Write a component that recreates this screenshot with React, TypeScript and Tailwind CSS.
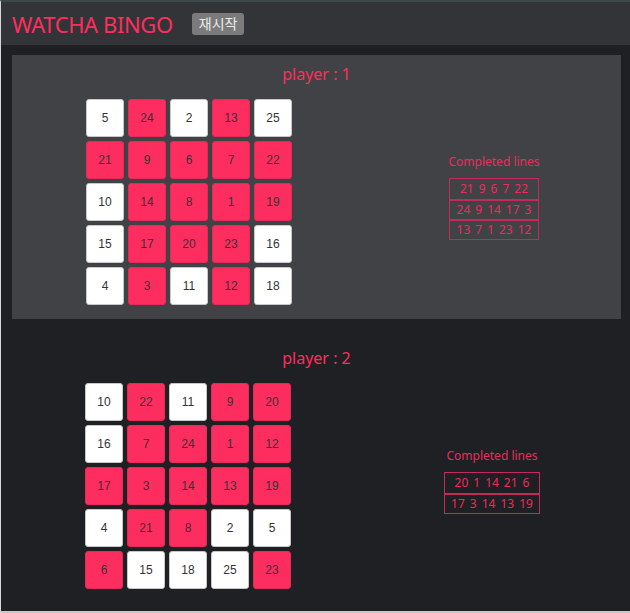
import React from 'react';

type Player = {
    id: number;
    board: number[][];
    marked: number[];
    lines: number[][];
};

const players: Player[] = [
    {
        id: 1,
        board: [
            [5, 24, 2, 13, 25],
            [21, 9, 6, 7, 22],
            [10, 14, 8, 1, 19],
            [15, 17, 20, 23, 16],
            [4, 3, 11, 12, 18],
        ],
        marked: [24, 13, 21, 9, 6, 7, 22, 14, 8, 1, 19, 17, 20, 23, 3, 12],
        lines: [
            [21, 9, 6, 7, 22],
            [24, 9, 14, 17, 3],
            [13, 7, 1, 23, 12],
        ],
    },
    {
        id: 2,
        board: [
            [10, 22, 11, 9, 20],
            [16, 7, 24, 1, 12],
            [17, 3, 14, 13, 19],
            [4, 21, 8, 2, 5],
            [6, 15, 18, 25, 23],
        ],
        marked: [22, 9, 20, 7, 24, 1, 12, 17, 3, 14, 13, 19, 21, 8, 6, 23],
        lines: [
            [20, 1, 14, 21, 6],
            [17, 3, 14, 13, 19],
        ],
    },
];

function Board({ player }: { player: Player }) {
    return (
        <div className="grid grid-cols-[repeat(5,38px)] gap-[4px]">
            {player.board.flat().map((n, i) => {
                const on = player.marked.includes(n);
                return (
                    <div
                        key={i}
                        className={
                            'w-[38px] h-[38px] rounded-[3px] flex items-center justify-center text-[12px] font-["Liberation_Sans",sans-serif] text-[#333] ' +
                            (on ? 'bg-[#fe2d60] border border-[#e52a58]' : 'bg-white border border-[#c8c8c8]')
                        }
                    >
                        {n}
                    </div>
                );
            })}
        </div>
    );
}

function Lines({ lines }: { lines: number[][] }) {
    return (
        <div className="w-[130px] flex flex-col items-center">
            <div className="text-[12px] leading-[16px] text-[#ee2a5c] mb-[8px]">Completed lines</div>
            <div className="border border-[#c42a55]">
                {lines.map((line, i) => (
                    <div
                        key={i}
                        className={'h-[20px] px-[4px] flex items-center justify-center text-[12px] text-[#ee2a5c] ' + (i > 0 ? 'border-t-2 border-[#c42a55]' : '')}
                    >
                        {line.map((n, j) => (
                            <span key={j} className="mx-[2.5px]">{n}</span>
                        ))}
                    </div>
                ))}
            </div>
        </div>
    );
}

export default function App() {
    return (
        <div className='w-[630px] h-[613px] bg-[#1f2024] border-t-2 border-t-[#3f4848] border-l border-l-[#d8d8d8] border-b-2 border-b-[#c8c8c8] font-["Noto_Sans",sans-serif] overflow-hidden'>
            {/* Header */}
            <div className="h-[43px] bg-[#333438] flex items-center pl-[11px]">
                <h1 className="text-[22px] leading-none font-normal text-[#ff2d5e] tracking-[-0.4px]">WATCHA BINGO</h1>
                <button className='ml-[19px] h-[22px] px-[7px] rounded-[3px] bg-[#7b7b7b] text-[14px] text-[#ececec] font-["Noto_Sans_CJK_KR",sans-serif]'>
                    재시작
                </button>
            </div>

            {/* Player 1 */}
            <div className="mt-[10px] ml-[11px] w-[609px] bg-[#414246] pt-[8px] pb-[14px]">
                <div className="text-center text-[16px] leading-[22px] text-[#ff2d5e] mb-[14px]">player : {players[0].id}</div>
                <div className="flex items-center pl-[74px]">
                    <Board player={players[0]} />
                    <div className="ml-[137px] mt-[-10px]">
                        <Lines lines={players[0].lines} />
                    </div>
                </div>
            </div>

            {/* Player 2 */}
            <div className="mt-[28px] ml-[11px] w-[609px]">
                <div className="text-center text-[16px] leading-[22px] text-[#ff2d5e] mb-[14px]">player : {players[1].id}</div>
                <div className="flex items-center pl-[73px]">
                    <Board player={players[1]} />
                    <div className="ml-[136px] mt-[-10px]">
                        <Lines lines={players[1].lines} />
                    </div>
                </div>
            </div>
        </div>
    );
}
